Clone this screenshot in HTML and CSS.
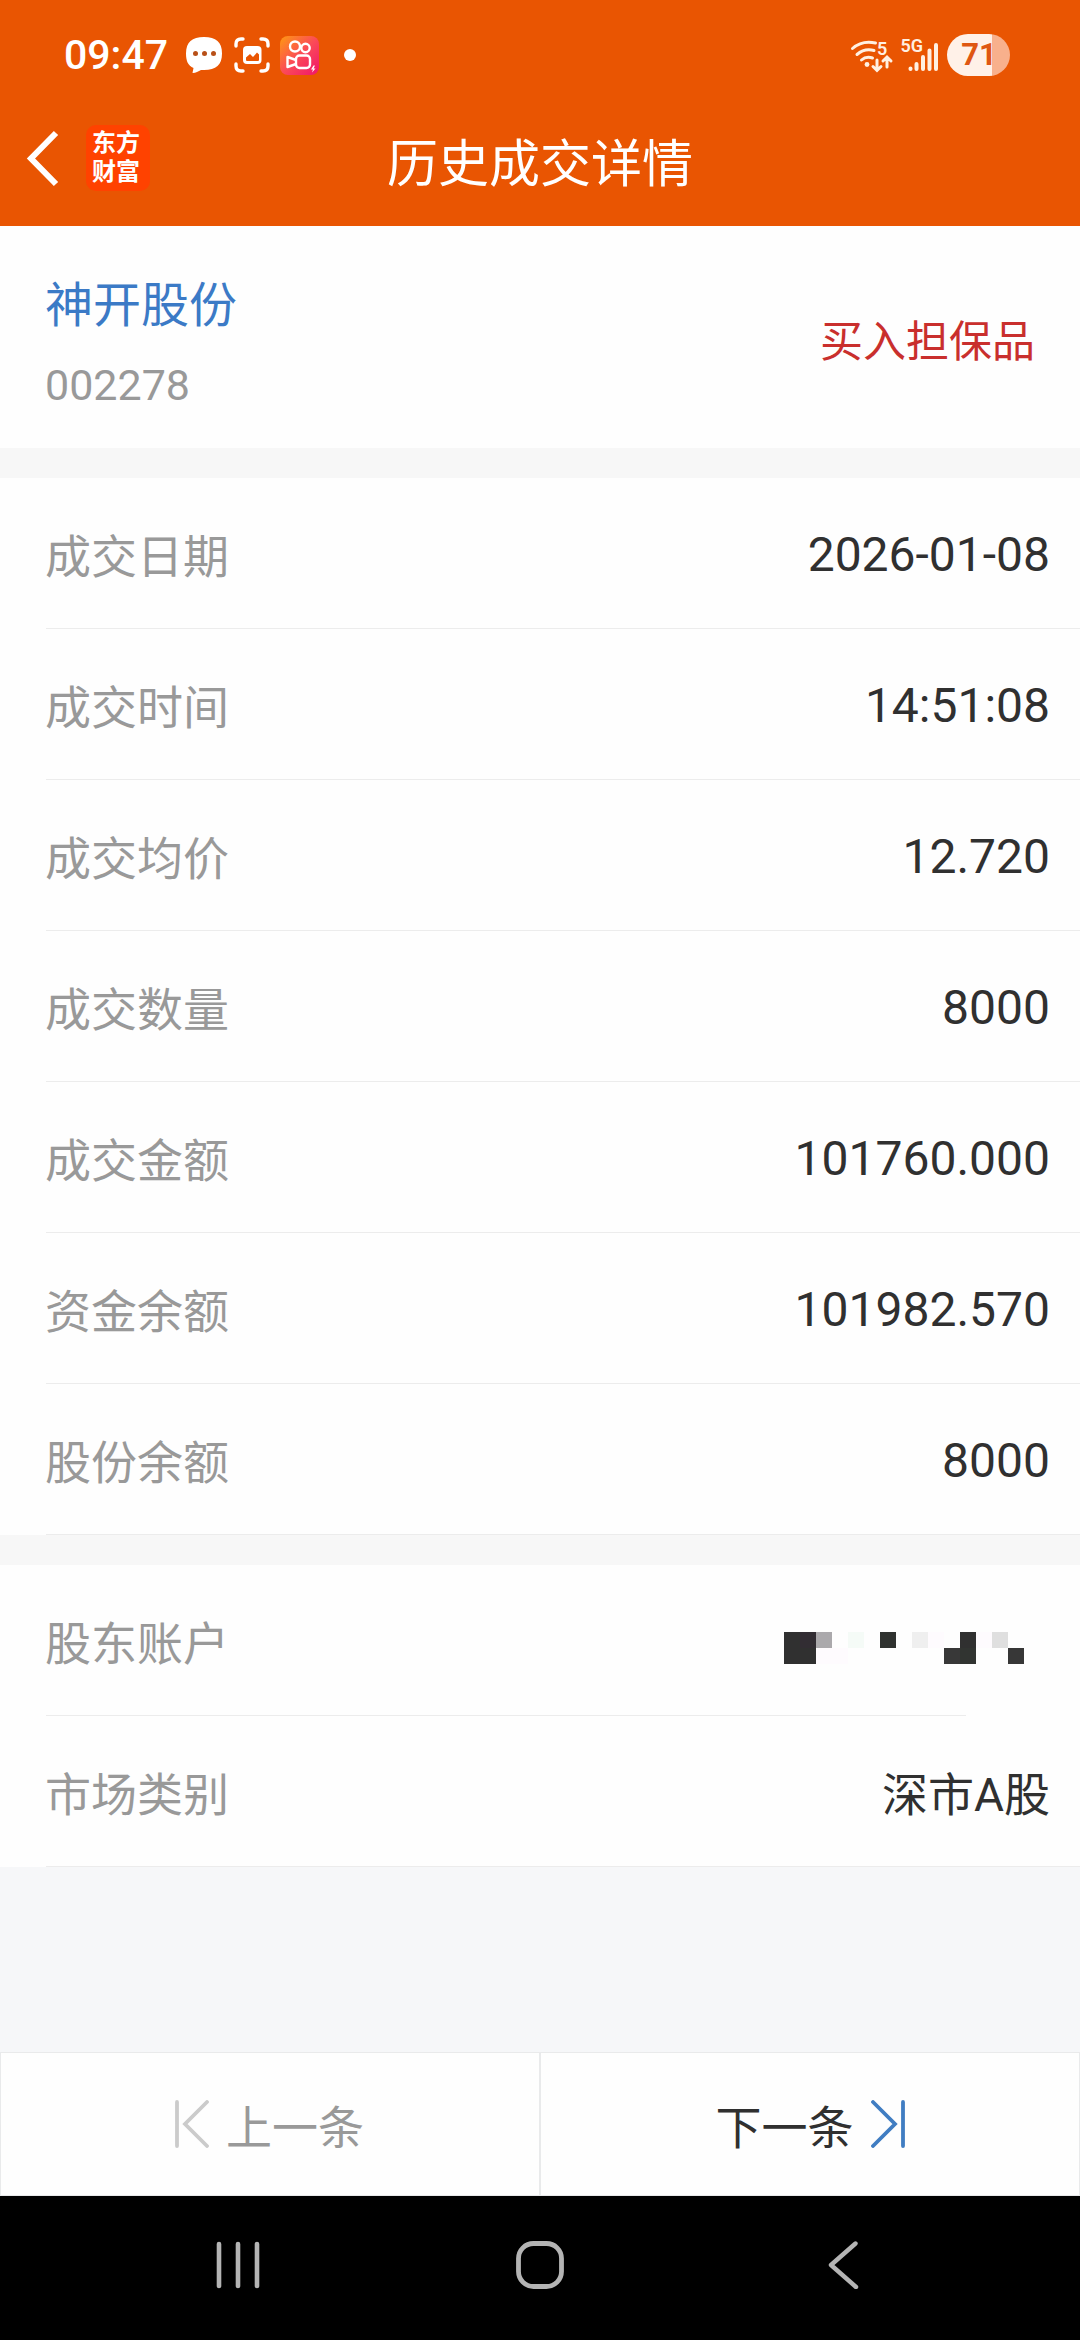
FILE: index.html
```html
<!DOCTYPE html>
<html lang="zh-CN">
<head>
    <meta charset="UTF-8">
    <meta name="viewport" content="width=device-width, initial-scale=1.0">
    <title>历史成交详情</title>
    <link rel="stylesheet" href="styles.css">
</head>
<body>
    <header class="header">
        <div class="status-bar">
            <div class="status-left">
                <span class="clock">09:47</span>
                <svg class="icon-chat" width="36" height="36" viewBox="0 0 36 36">
                    <path d="M18 0C30 0 36 5 36 16.500C36 28 30 33 18 33H15C12.500 34 9.500 36 7 36C6.500 36 6.500 35.500 6.700 35L7.500 31C2 28.500 0 24 0 16.500C0 5 6 0 18 0Z" fill="#fff"/>
                    <g fill="#b85018">
                        <circle cx="9.500" cy="16.500" r="2.500"/>
                        <circle cx="18.500" cy="16.500" r="2.500"/>
                        <circle cx="27.500" cy="16.500" r="2.500"/>
                    </g>
                </svg>
                <svg class="icon-scan" width="36" height="36" viewBox="0 0 36 36">
                    <path d="M2 9V7Q2 2 7 2H9M27 2H29Q34 2 34 7V9M34 27V29Q34 34 29 34H27M9 34H7Q2 34 2 29V27" fill="none" stroke="#fff" stroke-width="3.400" stroke-linecap="round"/>
                    <rect x="9" y="9" width="18.500" height="18" rx="4" fill="#fff"/>
                    <path d="M12 23V20.500L16 17L19 20L23 15.500L25 17.500V23Q25 24 24 24H13Q12 24 12 23Z" fill="#e95502"/>
                </svg>
                <svg class="icon-video" width="39" height="39" viewBox="0 0 39 39">
                    <defs>
                        <linearGradient id="videoBg" x1="0" y1="0" x2="1" y2="1">
                            <stop offset="0" stop-color="#ff9a10"/>
                            <stop offset="0.500" stop-color="#fb4b57"/>
                            <stop offset="1" stop-color="#f0146c"/>
                        </linearGradient>
                    </defs>
                    <rect width="39" height="39" rx="8" fill="url(#videoBg)"/>
                    <g fill="none" stroke="#fff" stroke-width="2.400" stroke-linejoin="round">
                        <circle cx="15" cy="10.500" r="5"/>
                        <circle cx="25.500" cy="12" r="4.200"/>
                        <rect x="16" y="19.500" width="14" height="12.500" rx="3.500"/>
                        <path d="M16 24L7.500 21V31L16 28"/>
                    </g>
                    <path d="M33.500 29.500L31 33.500H33L32 36.500L35.500 32.500H33.500L35 29.500Z" fill="#fff"/>
                </svg>
                <span class="more-dot"></span>
            </div>
            <div class="status-right">
                <svg width="90" height="42" viewBox="0 0 90 42">
                    <g fill="none" stroke="#fff0e2" stroke-width="3" stroke-linecap="round">
                        <path d="M2.500 14.500Q12 6 25.500 9"/>
                        <path d="M7 20.500Q14.500 14 24 16.500"/>
                        <path d="M11.500 26Q16 22 22.500 24"/>
                        <path d="M27 26V36M23 32.500L27 36.500L31 32.500M37 33V23.500M33 27L37 23L41 27"/>
                    </g>
                    <circle cx="17" cy="30.500" r="2.400" fill="#fff0e2"/>
                    <text x="27" y="20.500" class="net-label">5</text>
                    <text x="50.500" y="18" class="net-label">5G</text>
                    <g stroke="#fff0e2" stroke-width="4" stroke-linecap="round">
                        <path d="M60.500 34.500V35M66.500 30V35M73 23V35M79.500 16.500V35M86 11V35"/>
                    </g>
                </svg>
                <span class="battery">71</span>
            </div>
        </div>
        <div class="title-bar">
            <div class="title-left">
                <svg width="36" height="60" viewBox="0 0 36 60">
                    <path d="M31 5L6 30.500L31 56" fill="none" stroke="#fff" stroke-width="6"/>
                </svg>
                <div class="brand"><span>东方</span><span>财富</span></div>
            </div>
            <h1>历史成交详情</h1>
        </div>
    </header>

    <section class="stock">
        <div>
            <div class="stock-name">神开股份</div>
            <div class="stock-code">002278</div>
        </div>
        <div class="stock-action">买入担保品</div>
    </section>

    <section class="list">
        <div class="row"><span class="label">成交日期</span><span class="value">2026-01-08</span></div>
        <div class="row"><span class="label">成交时间</span><span class="value">14:51:08</span></div>
        <div class="row"><span class="label">成交均价</span><span class="value">12.720</span></div>
        <div class="row"><span class="label">成交数量</span><span class="value">8000</span></div>
        <div class="row"><span class="label">成交金额</span><span class="value">101760.000</span></div>
        <div class="row"><span class="label">资金余额</span><span class="value">101982.570</span></div>
        <div class="row"><span class="label">股份余额</span><span class="value">8000</span></div>
    </section>

    <section class="list">
        <div class="row row-account">
            <span class="label">股东账户</span>
            <!-- account number is masked -->
            <svg class="mask" width="240" height="32" viewBox="0 0 15 2" shape-rendering="crispEdges">
                <rect x="0" y="0" width="2" height="2" fill="#303030"/>
                <rect x="1" y="0" width="1" height="1" fill="#322d33"/>
                <rect x="2" y="0" width="1" height="1" fill="#aba9ac"/>
                <rect x="2" y="1" width="2" height="1" fill="#fefbfe"/>
                <rect x="4" y="0" width="1" height="1" fill="#f5fbf7"/>
                <rect x="6" y="0" width="1" height="1" fill="#2f322f"/>
                <rect x="8" y="0" width="1" height="1" fill="#efefef"/>
                <rect x="9" y="0" width="1" height="1" fill="#fefbfe"/>
                <rect x="10" y="1" width="1" height="1" fill="#383838"/>
                <rect x="11" y="0" width="1" height="1" fill="#303030"/>
                <rect x="11" y="1" width="1" height="1" fill="#313431"/>
                <rect x="12" y="0" width="1" height="1" fill="#fefbfe"/>
                <rect x="13" y="0" width="1" height="1" fill="#dfdfdf"/>
                <rect x="14" y="1" width="1" height="1" fill="#373737"/>
            </svg>
        </div>
        <div class="row"><span class="label">市场类别</span><span class="value value-cn">深市A股</span></div>
    </section>

    <footer class="pager">
        <div class="pager-btn prev">
            <svg width="34" height="48" viewBox="0 0 34 48">
                <path d="M2 2V46M32 2L10 24L32 46" fill="none" stroke="#cbcbcb" stroke-width="3.800" stroke-linecap="round"/>
            </svg>
            <span>上一条</span>
        </div>
        <div class="pager-btn next">
            <span>下一条</span>
            <svg width="34" height="48" viewBox="0 0 34 48">
                <path d="M32 2V46M2 2L24 24L2 46" fill="none" stroke="#407dc2" stroke-width="3.800" stroke-linecap="round"/>
            </svg>
        </div>
    </footer>

    <nav class="system-nav">
        <svg width="44" height="48" viewBox="0 0 44 48">
            <path d="M3 3V45M22 3V45M41 3V45" stroke="#b4b4b4" stroke-width="4.600" stroke-linecap="round"/>
        </svg>
        <svg class="nav-home" width="48" height="48" viewBox="0 0 48 48">
            <rect x="2.500" y="2.500" width="43" height="43" rx="15" fill="none" stroke="#b4b4b4" stroke-width="4.800"/>
        </svg>
        <svg width="32" height="48" viewBox="0 0 32 48">
            <path d="M28.500 2.500L4 24L29 46" fill="none" stroke="#b4b4b4" stroke-width="4.400" stroke-linecap="round" stroke-linejoin="round"/>
        </svg>
    </nav>
</body>
</html>
```

FILE: styles.css
```css
* {
    box-sizing: border-box;
}

body {
    margin: 0;
    width: 1080px;
    height: 2340px;
    display: flex;
    flex-direction: column;
    background: #f6f7f9;
    color: #303030;
    font-family: Roboto, "Noto Sans CJK SC", sans-serif;
    line-height: 60px;
    overflow: hidden;
}

svg {
    display: block;
    flex: none;
}

.header {
    height: 226px;
    background: #e95502;
    color: #fff;
}

.status-bar {
    height: 110px;
    padding: 0 70px 0 64px;
    display: flex;
    justify-content: space-between;
    align-items: center;
}

.status-left,
.status-right {
    display: flex;
    align-items: center;
}

.clock {
    width: 122px;
    font-size: 41px;
    font-weight: 500;
}

.icon-scan {
    margin-left: 12px;
}

.icon-video {
    margin-left: 10px;
}

.more-dot {
    width: 12px;
    height: 12px;
    margin-left: 25px;
    border-radius: 50%;
    background: #fff;
}

.status-right {
    gap: 7px;
}

.net-label {
    fill: #fff0e2;
    font-size: 18px;
    font-weight: 600;
}

.battery {
    width: 63px;
    height: 42px;
    padding-left: 1px;
    border-radius: 21px;
    background: linear-gradient(90deg, #fff1e8 45px, #f8b08c 45px);
    color: #df5712;
    font-size: 31px;
    font-weight: 700;
    line-height: 42px;
    text-align: center;
}

.title-bar {
    height: 96px;
    padding: 0 25px;
    display: grid;
    grid-template-columns: 1fr auto 1fr;
    align-items: center;
}

.title-left {
    display: flex;
    align-items: center;
    gap: 25px;
}

.brand {
    width: 64px;
    height: 66px;
    padding: 4px 0 0 6px;
    border-radius: 10px;
    background: #ff4200;
    display: flex;
    flex-direction: column;
    font-size: 24px;
    font-weight: 700;
    line-height: 29px;
}

h1 {
    margin: 0;
    padding-top: 13px;
    font-size: 51px;
    font-weight: 400;
}

.stock {
    height: 222px;
    padding: 50px 45px 0 45px;
    display: flex;
    justify-content: space-between;
    background: #fefefe;
}

.stock-name {
    color: #3b7ac6;
    font-size: 48px;
}

.stock-code {
    margin-top: 19px;
    color: #999;
    font-size: 43px;
}

.stock-action {
    margin-top: 36px;
    color: #c92f2d;
    font-size: 43px;
}

.list {
    border-top: 30px solid #f7f7f7;
    background: #fefefe;
}

.row {
    height: 151px;
    padding: 0 30px 0 45px;
    display: flex;
    justify-content: space-between;
    align-items: center;
    background: linear-gradient(#ececec, #ececec) 46px 100% / 100% 1px no-repeat;
}

.row-account {
    background-size: 920px 1px;
}

.label {
    padding-top: 7px;
    color: #999;
    font-size: 46px;
}

.value {
    padding-top: 3px;
    font-size: 48px;
}

.value-cn {
    padding-top: 7px;
    font-size: 46px;
}

.mask {
    margin: 14px 26px 0 0;
}

.pager {
    height: 144px;
    margin-top: auto;
    display: flex;
    background: #fefefe;
    font-size: 46px;
}

.pager-btn {
    flex: 1;
    display: flex;
    align-items: center;
    border: 1px solid #e9eaeb;
}

.pager-btn span {
    padding-top: 8px;
}

.prev {
    padding-left: 174px;
    gap: 17px;
    color: #999;
}

.next {
    padding-left: 175px;
    gap: 17px;
}

.system-nav {
    height: 144px;
    padding: 0 221px 6px 216px;
    display: flex;
    justify-content: space-between;
    align-items: center;
    background: #000;
}

.nav-home {
    margin-right: 7px;
}
```
